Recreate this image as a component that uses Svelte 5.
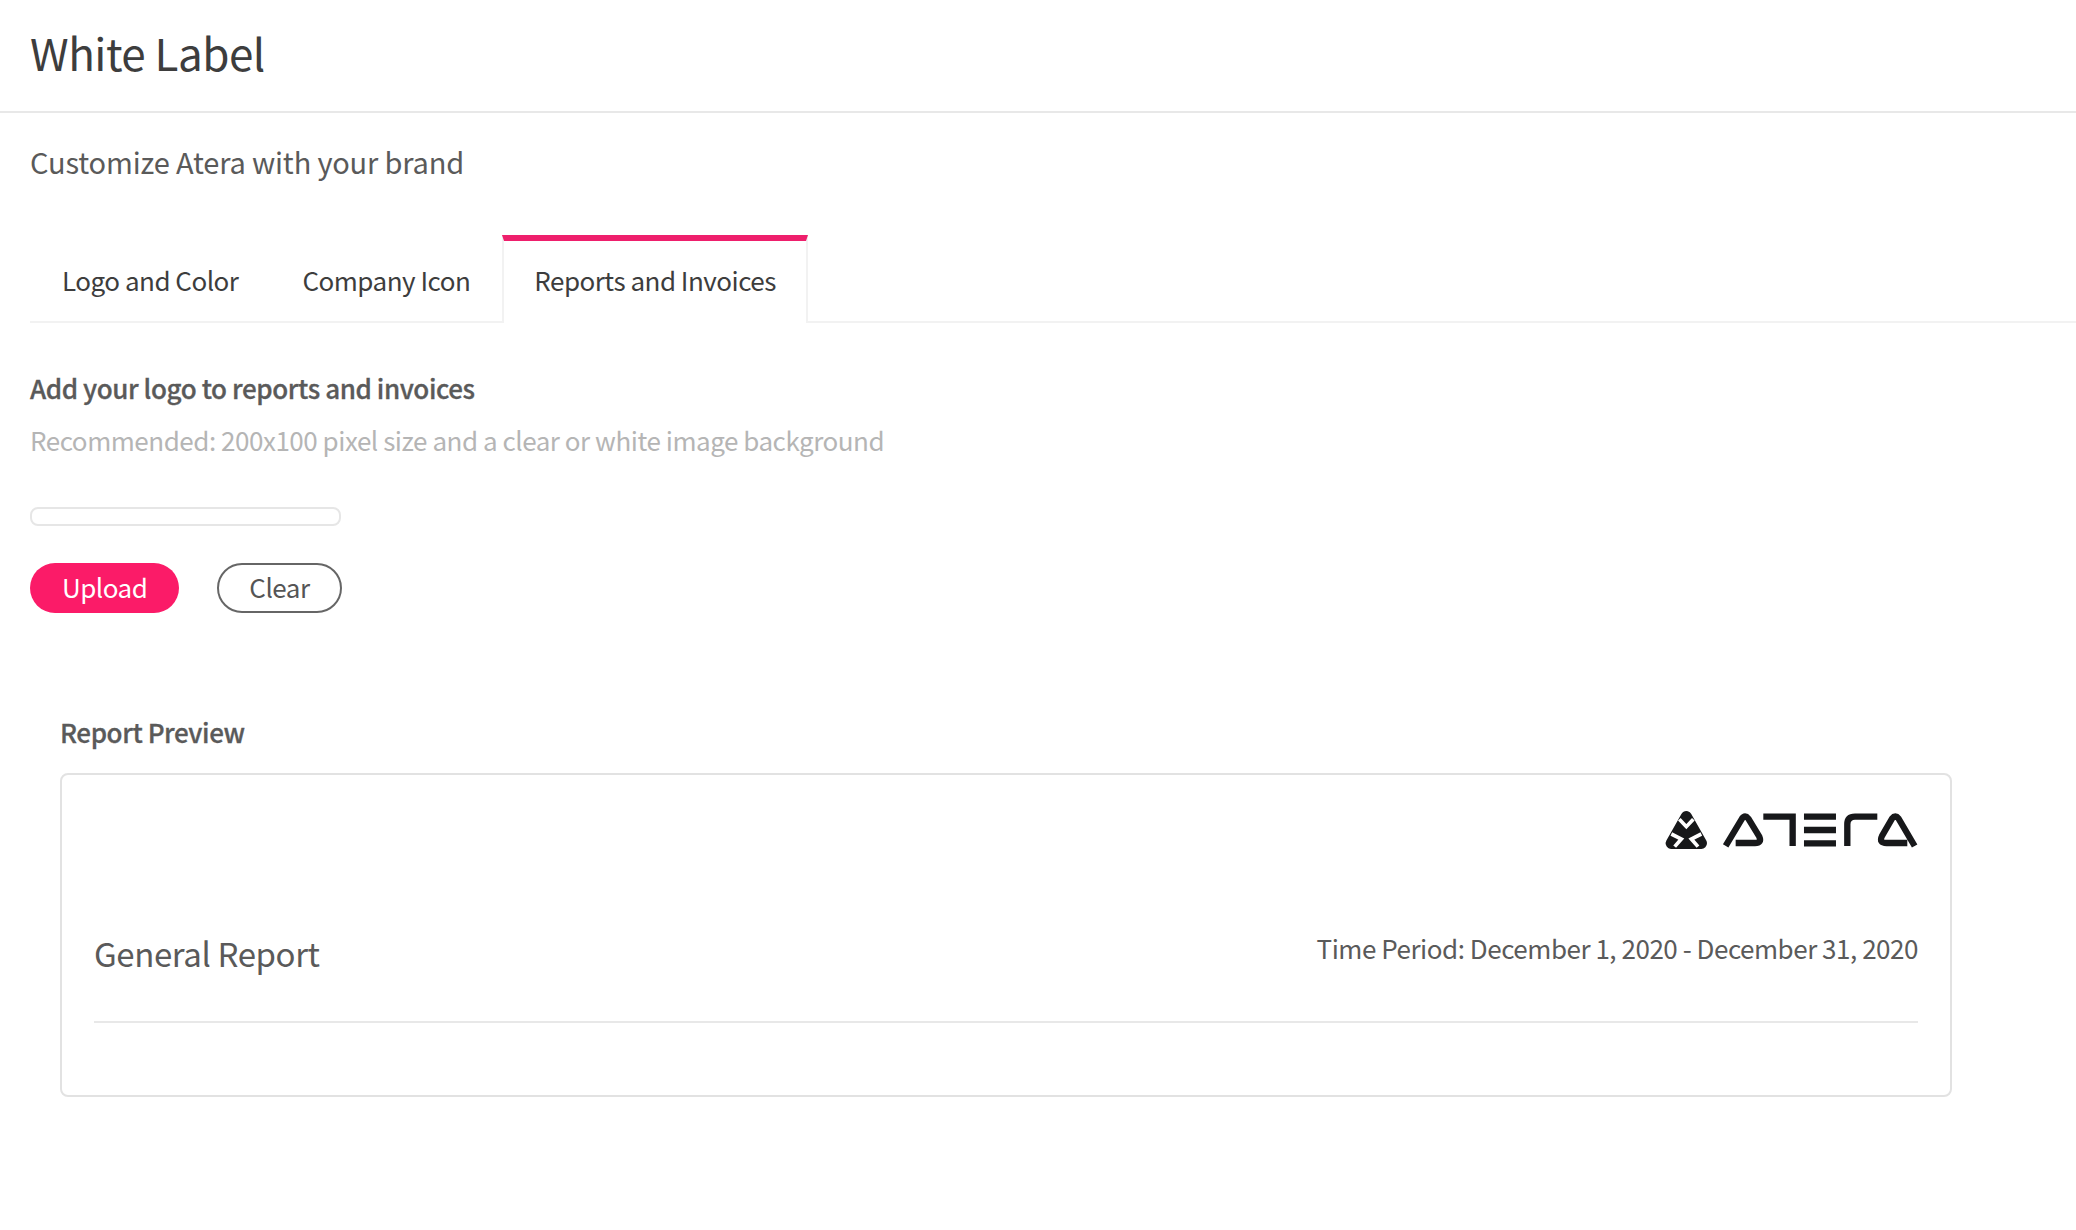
<script>
	const tabs = ['Logo and Color', 'Company Icon', 'Reports and Invoices']
	let active = 2
</script>

<div class="page">
	<header class="top">
		<h1>White Label</h1>
	</header>

	<main>
		<p class="sub">Customize Atera with your brand</p>

		<nav class="tabs">
			{#each tabs as tab, i}
				<button class="tab" class:active={i === active}>{tab}</button>
			{/each}
			<span class="rest"></span>
		</nav>

		<section class="upload">
			<h2>Add your logo to reports and invoices</h2>
			<p class="hint">Recommended: 200x100 pixel size and a clear or white image background</p>
			<div class="file"></div>
			<div class="actions">
				<button class="btn primary">Upload</button>
				<button class="btn outlined">Clear</button>
			</div>
		</section>

		<section class="preview">
			<h3>Report Preview</h3>
			<div class="card">
				<div class="logo">
					<svg viewBox="0 0 300 80" width="300" height="80" aria-label="Atera">
						<g transform="scale(0.3333)">
							<path d="M139 80 L94 160 H184 Z" fill="#17181a" stroke="#17181a" stroke-width="34" stroke-linejoin="round" />
							<g fill="none" stroke="#fff" stroke-width="11">
								<path d="M118 88 L139 110 L160 88" />
								<path d="M94 132 L124 147 L104 170" />
								<path d="M184 132 L154 147 L174 170" />
							</g>
							<g fill="none" stroke="#17181a" stroke-width="19">
								<path d="M257 168 L306 86 Q315 73 325 86 L358 140 Q366 159 345 159 L287 159" />
								<path d="M370 80 L458 80 L458 168" />
								<path d="M492 80 H588 M492 120 H588 M492 160 H588" />
								<path d="M712 80 H645 Q622 80 622 103 V168" />
								<path d="M824 168 L776 86 Q766 73 756 86 L726 138 Q716 159 740 159 L802 159" />
							</g>
						</g>
					</svg>
				</div>
				<div class="meta">
					<span class="name">General Report</span>
					<span class="period">Time Period: December 1, 2020 - December 31, 2020</span>
				</div>
				<hr />
			</div>
		</section>
	</main>
</div>

<style>
	:global(body) {
		margin: 0;
		background: #fff;
	}

	.page {
		font-family: 'Noto Sans CJK SC', 'Noto Sans', sans-serif;
		color: #3d3d3d;
		height: 1230px;
		overflow: hidden;
		letter-spacing: -0.47px;
	}

	.top {
		height: 104px;
		padding: 0 0 7px 30px;
		border-bottom: 2px solid #e8e8e8;
		display: flex;
		align-items: center;
	}

	h1 {
		margin: 0;
		font-size: 44px;
		font-weight: 400;
		line-height: 1;
		letter-spacing: -0.5px;
		color: #3d3d3d;
	}

	.sub {
		margin: 0;
		padding: 28px 30px 0;
		font-size: 29px;
		line-height: 40px;
		letter-spacing: -0.17px;
		color: #5a5a5a;
	}

	.tabs {
		display: flex;
		margin: 54px 0 0 30px;
		height: 88px;
	}

	.tab {
		font: inherit;
		font-size: 26px;
		letter-spacing: -0.5px;
		color: #3d3d3d;
		background: none;
		border: 0;
		border-bottom: 2px solid #f2f2f2;
		padding: 2px 32px 0;
	}

	.tab.active {
		border: 2px solid #f2f2f2;
		border-top: 6px solid #ee1f6c;
		border-bottom: 0;
		padding: 0 30px 6px;
	}

	.rest {
		flex: 1;
		border-bottom: 2px solid #f2f2f2;
	}

	.upload {
		padding: 46px 30px 0;
	}

	h2 {
		margin: 0;
		font-size: 26px;
		line-height: 38px;
		font-weight: 500;
		letter-spacing: -0.42px;
		-webkit-text-stroke: 0.3px #5a5a5a;
		color: #5a5a5a;
	}

	.hint {
		margin: 14px 0 0;
		font-size: 26px;
		line-height: 38px;
		color: #b5b5b5;
	}

	.file {
		width: 307px;
		height: 15px;
		margin-top: 48px;
		border: 2px solid #e6e6e6;
		border-radius: 8px;
	}

	.actions {
		display: flex;
		gap: 38px;
		margin-top: 37px;
	}

	.btn {
		font: inherit;
		font-size: 26px;
		letter-spacing: -0.5px;
		height: 50px;
		padding: 0 32px 3px;
		border-radius: 25px;
		display: flex;
		align-items: center;
	}

	.primary {
		background: #fb1b68;
		border: 0;
		color: #fff;
	}

	.outlined {
		background: #fff;
		border: 2px solid #666;
		color: #555;
		padding: 0 30px 3px;
	}

	.preview {
		padding: 100px 30px 0 60px;
	}

	h3 {
		margin: 0;
		font-size: 26px;
		line-height: 38px;
		font-weight: 500;
		letter-spacing: -0.42px;
		-webkit-text-stroke: 0.3px #5a5a5a;
		color: #5a5a5a;
	}

	.card {
		width: 1892px;
		height: 324px;
		box-sizing: border-box;
		margin-top: 22px;
		border: 2px solid #e2e2e2;
		border-radius: 8px;
		padding: 15px 32px 0;
	}

	.logo {
		display: flex;
		justify-content: flex-end;
		margin-right: -22px;
		height: 80px;
	}

	.meta {
		display: flex;
		justify-content: space-between;
		align-items: flex-start;
		margin-top: 60px;
	}

	.name {
		font-size: 33px;
		line-height: 46px;
		letter-spacing: -0.4px;
		color: #5a5a5a;
	}

	.period {
		font-size: 26px;
		line-height: 36px;
		color: #5a5a5a;
	}

	hr {
		margin: 45px 0 0;
		border: 0;
		border-top: 2px solid #e8e8e8;
	}
</style>
